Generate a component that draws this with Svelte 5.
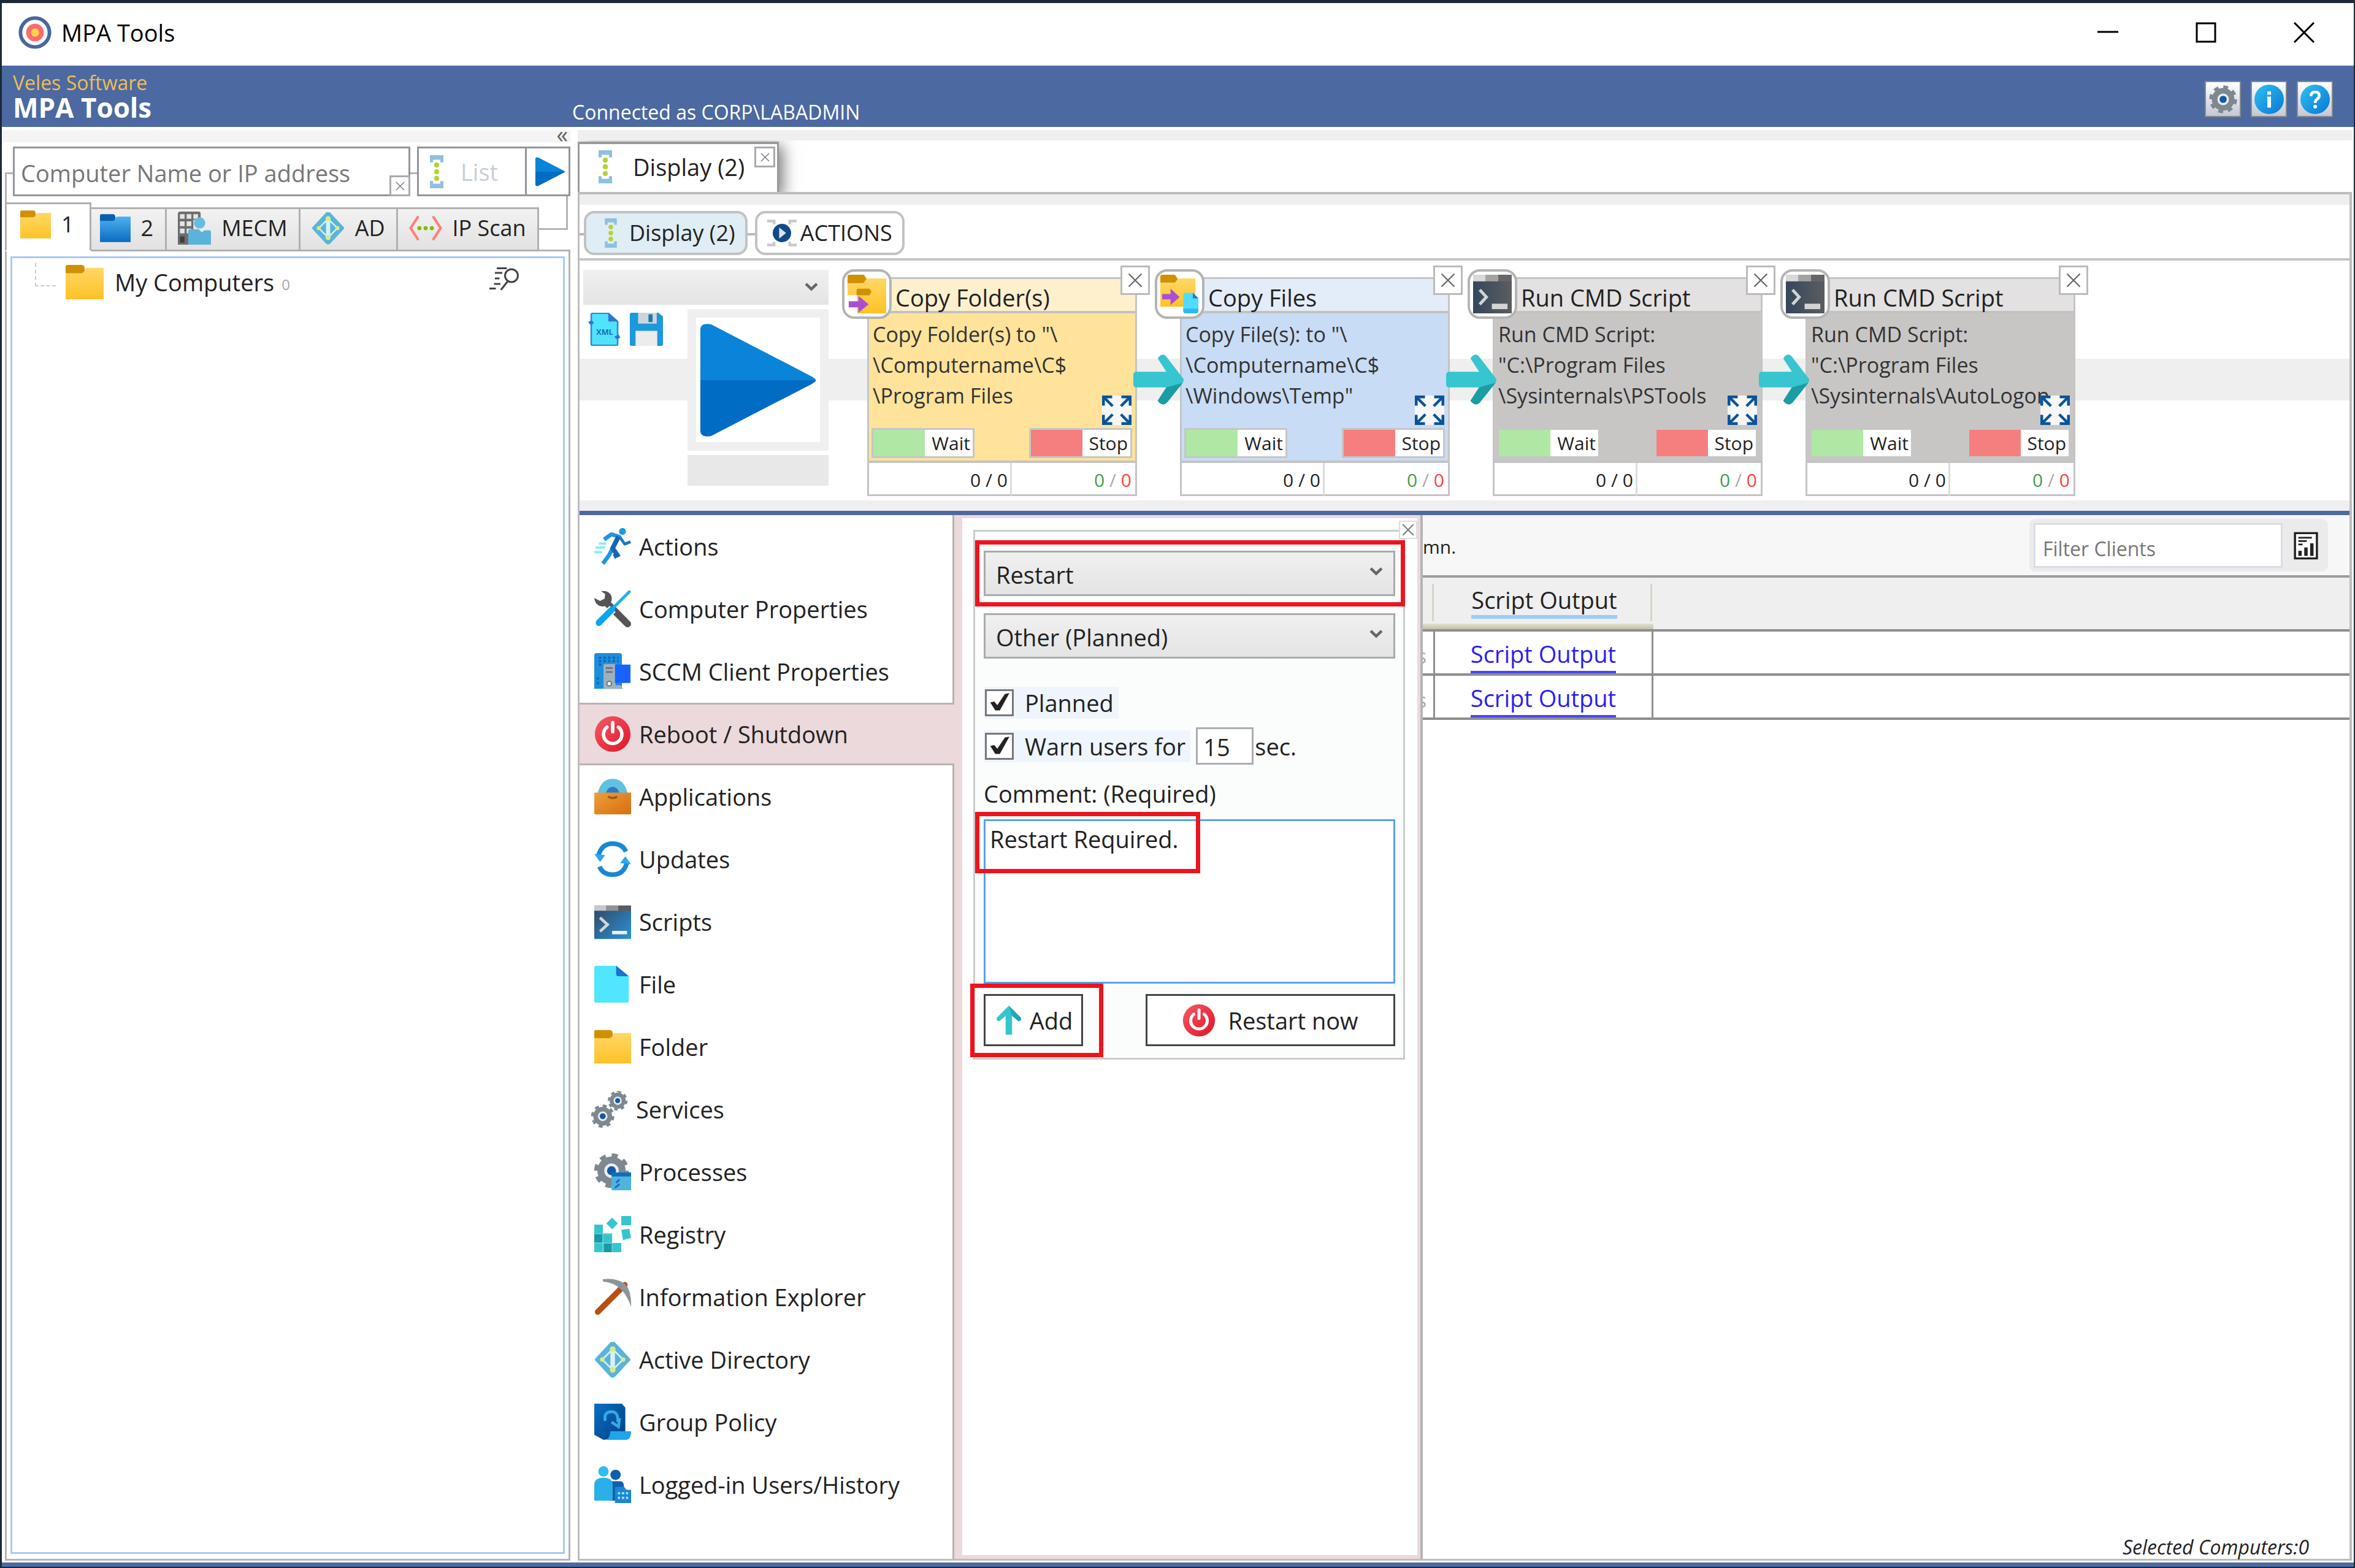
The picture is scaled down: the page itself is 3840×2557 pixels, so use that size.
<script lang="ts">
    type Step = {
        title: string;
        text: string;
        icon: string;
        tone: string;
    };

    const treeTabs = [
        { label: "1", icon: "folder" },
        { label: "2", icon: "folder-blue" },
        { label: "MECM", icon: "mecm" },
        { label: "AD", icon: "directory" },
        { label: "IP Scan", icon: "ipscan" },
    ];

    const steps: Step[] = [
        {
            title: "Copy Folder(s)",
            text: 'Copy Folder(s) to "\\\n\\Computername\\C$\n\\Program Files',
            icon: "copy-folder",
            tone: "yellow",
        },
        {
            title: "Copy Files",
            text: 'Copy File(s): to "\\\n\\Computername\\C$\n\\Windows\\Temp"',
            icon: "copy-file",
            tone: "blue",
        },
        {
            title: "Run CMD Script",
            text: 'Run CMD Script:\n"C:\\Program Files\n\\Sysinternals\\PSTools',
            icon: "cmd",
            tone: "gray",
        },
        {
            title: "Run CMD Script",
            text: 'Run CMD Script:\n"C:\\Program Files\n\\Sysinternals\\AutoLogon',
            icon: "cmd",
            tone: "gray",
        },
    ];

    const menu = [
        { label: "Actions", icon: "run" },
        { label: "Computer Properties", icon: "tools" },
        { label: "SCCM Client Properties", icon: "sccm" },
        { label: "Reboot / Shutdown", icon: "power" },
        { label: "Applications", icon: "apps" },
        { label: "Updates", icon: "updates" },
        { label: "Scripts", icon: "scripts" },
        { label: "File", icon: "file" },
        { label: "Folder", icon: "folder" },
        { label: "Services", icon: "services" },
        { label: "Processes", icon: "processes" },
        { label: "Registry", icon: "registry" },
        { label: "Information Explorer", icon: "pickaxe" },
        { label: "Active Directory", icon: "directory" },
        { label: "Group Policy", icon: "policy" },
        { label: "Logged-in Users/History", icon: "users" },
    ];

    let activeTab = $state("1");
    let selected = $state("Reboot / Shutdown");
    let action = $state("Restart");
    let reason = $state("Other (Planned)");
    let planned = $state(true);
    let warn = $state(true);
    let seconds = $state("15");
    let comment = $state("Restart Required.");
</script>

{#snippet gear(cx: number, cy: number, r: number)}
    <circle {cx} {cy} r={r * 0.9} fill="none" stroke="#7d8890" stroke-width={r * 0.22} pathLength="16" stroke-dasharray="1 1" />
    <circle {cx} {cy} r={r * 0.62} fill="#e8edf1" stroke="#7d8890" stroke-width={r * 0.4} />
    <circle {cx} {cy} r={r * 0.26} fill="#0f5aa8" />
{/snippet}

{#snippet icon(name: string)}
    <svg class="icon" viewBox="0 0 64 64" aria-hidden="true">
        {#if name === "folder"}
            <path d="M0 6q0-3 3-3h24q4 0 5 5v10H0z" fill="#d19000" />
            <path d="M0 17h26q4 0 6-5 1-4 5-4h27v53H0z" fill="url(#g-folder)" />
        {:else if name === "folder-blue"}
            <path d="M0 6q0-3 3-3h24q4 0 5 5v10H0z" fill="#0a5fae" />
            <path d="M0 17h26q4 0 6-5 1-4 5-4h27v53H0z" fill="url(#g-blue)" />
        {:else if name === "mecm"}
            <path d="M6 0h34q4 0 4 4v12H30v48H0V4q0-4 6-4z" fill="#6e6e6e" />
            <path d="M4 5h9v9H4zM17 5h9v9h-9zM30 5h9v9h-9zM4 19h9v9H4zM17 19h9v9h-9zM4 33h9v9H4zM17 33h9v9h-9z" fill="#e4e4e4" />
            <path d="M4 48h9v12H4z" fill="#3f3f3f" />
            <circle cx="42" cy="22" r="11" fill="#68bce0" />
            <path d="M20 38q0-4 4-4h16l6 6 6-4h8q4 0 4 4v24H20z" fill="#5cb3da" />
        {:else if name === "directory"}
            <path d="M32 2q2-2 4 0l26 28q2 2 0 4L36 62q-4 3-8 0L2 34q-2-2 0-4L28 2q2-2 4 0z" fill="#59b4d9" />
            <path d="M32 12 52 32 32 52 12 32z" fill="#d9f0fa" />
            <path d="M28 20v24L16 32zM36 20v24l12-12z" fill="#59b4d9" />
            <circle cx="32" cy="14" r="5" fill="#dcea86" />
            <circle cx="32" cy="50" r="5" fill="#dcea86" />
            <circle cx="14" cy="32" r="4" fill="#dcea86" />
            <circle cx="50" cy="32" r="4" fill="#dcea86" />
        {:else if name === "ipscan"}
            <path d="M18 9 3 32l15 23M46 9l15 23-15 23" fill="none" stroke="#ff8177" stroke-width="5" />
            <circle cx="20" cy="32" r="4" fill="#7fba00" />
            <circle cx="32" cy="32" r="4" fill="#7fba00" />
            <circle cx="44" cy="32" r="4" fill="#7fba00" />
        {:else if name === "list"}
            <path d="M19 0h26v14h-6V9H25v5h-6zM19 64h26V50h-6v5H25v-5h-6z" fill="#8fc0df" />
            <g fill="#b4d334">
                <circle cx="32" cy="19" r="5" />
                <circle cx="32" cy="32" r="5" />
                <circle cx="32" cy="45" r="5" />
            </g>
        {:else if name === "play"}
            <path d="M0 4q0-4 6-3l56 29q3 2 2 2H0z" fill="#0a84d8" />
            <path d="M0 60q0 4 6 3l56-29q3-2 2-2H0z" fill="#006cc4" />
        {:else if name === "actions"}
            <path d="M0 3h18v10h-6V9H0zM64 3H46v10h6V9h12zM0 61h18V51h-6v4H0zM64 61H46V51h6v4h12z" fill="#c9c9c9" />
            <circle cx="32" cy="32" r="20" fill="#124a85" />
            <path d="M26 20v24l15-12z" fill="#dbe5ee" />
        {:else if name === "gear"}
            {@render gear(32, 32, 30)}
        {:else if name === "info"}
            <circle cx="32" cy="32" r="32" fill="url(#g-badge)" />
            <path d="M28 15h8v7h-8zM28 26h8v24h-8z" fill="#fff" />
        {:else if name === "help"}
            <circle cx="32" cy="32" r="32" fill="url(#g-badge)" />
            <path d="M23 25q0-9 9-9t9 8q0 5-5 8-4 3-4 8" fill="none" stroke="#fff" stroke-width="6" />
            <circle cx="32" cy="48" r="4" fill="#fff" />
        {:else if name === "copy-folder"}
            <path d="M0 3q0-3 3-3h24l5 7-4 8H0z" fill="#d19000" />
            <path d="M0 14h26l6-8h32v58H16V34H0z" fill="url(#g-folder)" />
            <path d="M15 26q0-3 3-3h18l4 5-4 6H15z" fill="#d19000" />
            <path d="M2 44h16v-9l17 14-17 14v-9H2z" fill="#a84fd6" />
        {:else if name === "copy-file"}
            <path d="M0 3q0-3 3-3h21l5 7-4 8H0z" fill="#d19000" />
            <path d="M0 13h24l6-7h28v47H0z" fill="url(#g-folder)" />
            <path d="M3 32h14v-9l15 14-15 13v-9H3z" fill="#a84fd6" />
            <path d="M38 34q0-4 4-4h12l9 9v21q0 4-4 4H42q-4 0-4-4z" fill="#4fdcff" />
            <path d="M54 30v9h9z" fill="#1976d2" />
            <path d="M38 56h25v4q0 4-4 4H42q-4 0-4-4z" fill="#2fb8ee" />
        {:else if name === "cmd"}
            <path d="M0 0h64v64H0z" fill="url(#g-dark)" />
            <path d="M0 0h21v11H0z" fill="#d8d8d8" />
            <path d="M21 0h21v11H21z" fill="#a3a3a3" />
            <path d="M42 0h22v11H42z" fill="#666" />
            <path d="m11 25 11 12-11 12" fill="none" stroke="#d4d4d4" stroke-width="5" />
            <path d="M31 48h26v9H31z" fill="#d4d4d4" />
        {:else if name === "xml"}
            <path d="M6 4q0-3 3-3h30l18 16v43q0 3-3 3H9q-3 0-3-3z" fill="#4fe3ff" stroke="#2a86d8" stroke-width="3" />
            <path d="M39 1v16h18z" fill="#2f74cf" />
            <path d="M0 18q8-6 11 2l-6 4zM62 48q-8 6-11-2l8-4z" fill="#2f74cf" />
            <text x="32" y="43" text-anchor="middle" font-size="15" font-weight="700" fill="#156fb5">XML</text>
        {:else if name === "save"}
            <path d="M0 3q0-3 3-3h52l9 7v54q0 3-3 3H3q-3 0-3-3z" fill="#1c98dd" />
            <path d="M16 0h36v21H16z" fill="#cfd4d8" />
            <path d="M36 3h8v15h-8z" fill="#167cad" />
            <path d="M11 35h42v29H11z" fill="#ececec" />
        {:else if name === "arrow"}
            <path d="M0 26q0-4 4-4h38L31 5q6-9 12-1l20 26q2 2 0 5H0z" fill="#37c5d0" />
            <path d="M0 32h64q0 3-2 5L43 61q-6 6-12-2l11-17H4q-4 0-4-4z" fill="#37c5d0" />
            <path d="m42 42 21-6-20 25q-6 6-12-2z" fill="#1c9ca3" />
        {:else if name === "expand"}
            <path d="M0 0h64v64H0z" fill="#f7f7f7" />
            <path d="M3 22V3h19M42 3h19v19M61 42v19H42M22 61H3V42M4 4l19 19M60 4 41 23M60 60 41 41M4 60l19-19" fill="none" stroke="#0a5399" stroke-width="6" />
        {:else if name === "run"}
            <circle cx="49" cy="6" r="6" fill="#1c98e0" />
            <path d="m17 20 13-9 13 4-10 18-7 14-11 15" fill="none" stroke="#2196e0" stroke-width="7" stroke-linejoin="round" />
            <path d="m42 15-10 20 8 12-6 3" fill="none" stroke="#1565b5" stroke-width="8" />
            <path d="m44 15 9 13 10-4" fill="none" stroke="#1d76c4" stroke-width="5" stroke-linejoin="round" />
            <path d="M8 27h13M2 34h17M0 42h14" stroke="#8be9fb" stroke-width="4" />
        {:else if name === "tools"}
            <path d="m24 24 34 34" stroke="#555" stroke-width="12" stroke-linecap="round" />
            <path d="M12 1q14-2 18 9 2 9-4 14-8 6-18 2-7-4-8-13l10 5 8-4 1-8z" fill="#555" />
            <path d="M61 2 32 31" stroke="#18b0f4" stroke-width="5" stroke-linecap="round" />
            <path d="M32 32 7 56" stroke="#fff" stroke-width="15" />
            <path d="M31 33 8 56" stroke="#06a7f0" stroke-width="11" stroke-linecap="round" />
        {:else if name === "sccm"}
            <path d="M0 4q0-4 4-4h40q4 0 4 4v58H0z" fill="#1c8edb" />
            <path d="M8 8h34M8 14h34M8 20h8M4 44h8M4 52h8" stroke="#1565b5" stroke-width="4" stroke-dasharray="4 4" />
            <path d="M16 22q0-3 3-3h18v37h9l4 6H16z" fill="#9fb0bd" />
            <path d="M20 26h12M20 33h12" stroke="#65737e" stroke-width="3" />
            <circle cx="26" cy="53" r="4" fill="#fff" stroke="#65737e" stroke-width="2" />
            <path d="M36 20h27v32H36z" fill="#1a62ff" />
        {:else if name === "power"}
            <circle cx="32" cy="32" r="31" fill="url(#g-red)" />
            <path d="M22 20a16 16 0 1 0 20 0" fill="none" stroke="#fff" stroke-width="6" stroke-linecap="round" />
            <path d="M32 12v16" stroke="#fff" stroke-width="6" stroke-linecap="round" />
        {:else if name === "apps"}
            <path d="M6 26Q12 1 32 1t26 25z" fill="#5fc3df" />
            <path d="M20 26q4-11 12-11t12 11z" fill="#2b79c9" />
            <path d="M0 25h64v36q0 2-2 2H2q-2 0-2-2z" fill="url(#g-orange)" />
            <path d="M24 32q8 5 16 0" fill="none" stroke="#9c5a14" stroke-width="4" />
        {:else if name === "updates"}
            <path d="M7 27Q12 5 32 5q17 0 23 14" fill="none" stroke="#1a87d4" stroke-width="8" />
            <path d="M57 37Q52 59 32 59 15 59 9 45" fill="none" stroke="#1a87d4" stroke-width="8" />
            <path d="m0 23 19 2-9 12zM64 41l-19-2 9-12z" fill="#2ba8ea" />
        {:else if name === "scripts"}
            <path d="M0 4h64v58H0z" fill="url(#g-script)" />
            <path d="M0 4h21v9H0z" fill="#c9c9c9" />
            <path d="M21 4h21v9H21z" fill="#929292" />
            <path d="M42 4h22v9H42z" fill="#5b5b5b" />
            <path d="m10 25 13 12-13 12" fill="none" stroke="#d4d4d4" stroke-width="5" />
            <path d="M31 48h26v6H31z" fill="#eee" />
        {:else if name === "file"}
            <path d="M0 3q0-3 3-3h36l21 18v43q0 3-3 3H3q-3 0-3-3z" fill="#50e6ff" />
            <path d="M38 0v14q0 4 4 4h18z" fill="#1f6fcf" />
        {:else if name === "services"}
            {@render gear(46, 17, 17)}
            {@render gear(20, 44, 20)}
        {:else if name === "processes"}
            {@render gear(30, 30, 30)}
            <path d="M30 33h34v31H30z" fill="#4fb4dc" />
            <path d="M30 33h34v7H30z" fill="#0f6cbd" />
            <path d="m44 45-6 6M44 53l-8 7" stroke="#1565c0" stroke-width="3" />
        {:else if name === "registry"}
            <path d="M0 15h15v15h16v17h16v16H0z" fill="#36c5cf" />
            <path d="M0 31h14v15H0zM17 48h14v15H17z" fill="#179aa3" />
            <path d="M0 31h31M0 47h31M15 31v32M31 47v16" stroke="#86e3e8" />
            <path d="m31 3 10 10-10 10L21 13zM47 0h17v16H47zM47 24l14-2 3 16-14 4z" fill="#36c5cf" />
        {:else if name === "pickaxe"}
            <path d="M53 11 6 58" stroke="#b84e14" stroke-width="10" stroke-linecap="round" />
            <path d="M15 1q26-3 40 10 10 12 9 38Q57 29 46 18 34 7 15 5z" fill="#8b959c" />
        {:else if name === "policy"}
            <path d="M0 0h48l6 7v44H28q0 12-12 12L0 54z" fill="url(#g-policy)" />
            <path d="M28 48h36q0 15-9 15H20q8-3 8-15z" fill="#1ea6ec" />
            <path d="M19 30q-3-16 11-16 12 0 11 18M30 32l12 8 2-15" fill="none" stroke="#35a9e8" stroke-width="5" />
        {:else if name === "users"}
            <circle cx="37" cy="15" r="9" fill="#0f5fae" />
            <path d="M28 60V30q0-4 4-4h13q5 0 6 5l4 29z" fill="#0f5fae" />
            <circle cx="16" cy="9" r="9" fill="#30bdf2" />
            <path d="M0 33q0-13 16-13t16 13v25q0 2-2 2H2q-2 0-2-2z" fill="#2aafe9" />
            <path d="M36 36h16l4 5h8v23H36z" fill="#1587d6" />
            <path d="M41 47h18M41 55h18" stroke="#a9dcf8" stroke-width="4" stroke-dasharray="4 3" />
        {:else if name === "search"}
            <circle cx="48" cy="26" r="14" fill="none" stroke="#444" stroke-width="4" />
            <path d="M40 38 25 57M16 10h22M12 20h16M12 32h10M10 44h14M0 54h14" stroke="#444" stroke-width="4" />
        {:else if name === "report"}
            <path d="M6 2h52v60H6z" fill="#fff" stroke="#222" stroke-width="5" />
            <path d="M14 13h32M14 21h20M14 29h10" stroke="#222" stroke-width="4" />
            <path d="M18 44v12M32 36v20M46 26v30" stroke="#222" stroke-width="8" />
        {:else if name === "up"}
            <path d="M25 63V22L11 34q-8-2-5-8L32 0l26 26q3 6-5 8L39 22v41z" fill="#36c5cf" />
            <path d="M39 22 32 0l26 26q3 6-5 8z" fill="#1fa9b2" />
        {:else if name === "close"}
            <path d="m4 4 56 56M60 4 4 60" stroke="currentColor" stroke-width="6" />
        {:else if name === "chevron"}
            <path d="m6 20 26 25 26-25" fill="none" stroke="currentColor" stroke-width="13" />
        {:else if name === "target"}
            <circle cx="32" cy="32" r="28" fill="#fff" stroke="#4a66a0" stroke-width="7" />
            <circle cx="32" cy="32" r="17" fill="#ff6a6a" />
            <circle cx="32" cy="32" r="8" fill="#ffd34d" />
        {/if}
    </svg>
{/snippet}

<svg class="defs" width="0" height="0" aria-hidden="true">
    <defs>
        <linearGradient id="g-folder" x2="0" y2="1"><stop stop-color="#ffd766" /><stop offset="1" stop-color="#ffc225" /></linearGradient>
        <linearGradient id="g-blue" x2="0" y2="1"><stop stop-color="#4db1f0" /><stop offset="1" stop-color="#0b6cc0" /></linearGradient>
        <linearGradient id="g-badge" x2="1" y2="1"><stop stop-color="#2fc0f2" /><stop offset="1" stop-color="#0878d4" /></linearGradient>
        <linearGradient id="g-dark" x2="1" y2="0"><stop stop-color="#34475c" /><stop offset="1" stop-color="#5b5d60" /></linearGradient>
        <linearGradient id="g-red" x2="1" y2="1"><stop stop-color="#f85a64" /><stop offset="1" stop-color="#dd1428" /></linearGradient>
        <linearGradient id="g-orange" x2="1" y2="1"><stop stop-color="#ee9d3c" /><stop offset="1" stop-color="#d6700f" /></linearGradient>
        <linearGradient id="g-script" x2="1" y2="1"><stop stop-color="#33475d" /><stop offset="1" stop-color="#2892dc" /></linearGradient>
        <linearGradient id="g-policy" x2="1" y2="1"><stop stop-color="#0a6fc2" /><stop offset="1" stop-color="#003f87" /></linearGradient>
    </defs>
</svg>

<div class="window">
    <div class="titlebar">
        <span class="app-icon">{@render icon("target")}</span>
        <span class="app-title">MPA Tools</span>
        <div class="window-buttons">
            <button aria-label="Minimize">
                <svg viewBox="0 0 34 34"><path d="M0 16h34" /></svg>
            </button>
            <button aria-label="Maximize">
                <svg viewBox="0 0 34 34"><path d="M2 2h30v30H2z" /></svg>
            </button>
            <button aria-label="Close">
                <svg viewBox="0 0 34 34"><path d="m1 1 32 32M33 1 1 33" /></svg>
            </button>
        </div>
    </div>

    <header class="banner">
        <div class="brand">
            <span class="vendor">Veles Software</span>
            <h1>MPA Tools</h1>
        </div>
        <span class="connected">Connected as CORP\LABADMIN</span>
        <div class="banner-buttons">
            <button aria-label="Settings">{@render icon("gear")}</button>
            <button aria-label="About">{@render icon("info")}</button>
            <button aria-label="Help">{@render icon("help")}</button>
        </div>
    </header>

    <main>
        <aside class="computers">
            <div class="strip collapse"><button aria-label="Collapse">«</button></div>
            <div class="lookup">
                <div class="search-row">
                    <div class="search-box">
                        <input aria-label="Computer name" placeholder="Computer Name or IP address" />
                        <button class="mini-close" aria-label="Clear">{@render icon("close")}</button>
                    </div>
                    <div class="list-box">
                        <button class="list">{@render icon("list")}<span>List</span></button>
                        <button class="go" aria-label="Go">{@render icon("play")}</button>
                    </div>
                </div>
                <div class="tree-tabs">
                    {#each treeTabs as tab}
                        <button
                            class:active={activeTab === tab.label}
                            class:folder={tab.icon.startsWith("folder")}
                            onclick={() => (activeTab = tab.label)}
                        >
                            {@render icon(tab.icon)}
                            <span>{tab.label}</span>
                        </button>
                    {/each}
                </div>
            </div>
            <div class="tree-pane">
                <div class="tree">
                    <div class="tree-node">
                        <span class="branch"></span>
                        <span class="node-icon">{@render icon("folder")}</span>
                        <span>My Computers</span>
                        <small>0</small>
                        <button class="find" aria-label="Find">{@render icon("search")}</button>
                    </div>
                </div>
            </div>
        </aside>

        <section class="workspace">
            <div class="strip"></div>
            <div class="doc-tabs">
                <div class="doc-tab">
                    {@render icon("list")}
                    <span>Display (2)</span>
                    <button class="mini-close" aria-label="Close tab">{@render icon("close")}</button>
                </div>
            </div>

            <div class="frame">
                <div class="strip"></div>
                <div class="view-tabs">
                    <button class="view on">{@render icon("list")}<span>Display (2)</span></button>
                    <button class="view">{@render icon("actions")}<span>ACTIONS</span></button>
                </div>

                <div class="flow">
                    <div class="flow-controls">
                        <div class="select preset">
                            <select aria-label="Saved sequence"><option></option></select>
                            {@render icon("chevron")}
                        </div>
                        <div class="files">
                            <button aria-label="Load XML">{@render icon("xml")}</button>
                            <button aria-label="Save">{@render icon("save")}</button>
                        </div>
                        <button class="run" aria-label="Run">{@render icon("play")}</button>
                        <div class="run-state"></div>
                    </div>

                    <div class="steps">
                        {#each steps as step, i}
                            {#if i > 0}
                                <span class="arrow">{@render icon("arrow")}</span>
                            {/if}
                            <article class="step {step.tone}">
                                <span class="badge">{@render icon(step.icon)}</span>
                                <button class="remove" aria-label="Remove step">{@render icon("close")}</button>
                                <h2>{step.title}</h2>
                                <div class="step-body">
                                    <p>{step.text}</p>
                                    <button class="expand" aria-label="Expand">{@render icon("expand")}</button>
                                    <div class="toggles">
                                        <button class="toggle wait">Wait</button>
                                        <button class="toggle stop">Stop</button>
                                    </div>
                                </div>
                                <div class="counts">
                                    <span>0 / 0</span>
                                    <span><b class="ok">0</b> <i>/</i> <b class="bad">0</b></span>
                                </div>
                            </article>
                        {/each}
                    </div>
                </div>
                <div class="strip"></div>

                <div class="lower">
                    <nav>
                        {#each menu as item}
                            <button
                                class:selected={selected === item.label}
                                class:outdent={item.icon === "services"}
                                onclick={() => (selected = item.label)}
                            >
                                {@render icon(item.icon)}
                                <span>{item.label}</span>
                            </button>
                        {/each}
                        <div class="nav-rest"></div>
                    </nav>

                    <div class="detail">
                        <div class="detail-body">
                            <button class="panel-close" aria-label="Close panel">{@render icon("close")}</button>
                            <form onsubmit={(e) => e.preventDefault()}>
                                <div class="select marked">
                                    <select aria-label="Action" bind:value={action}>
                                        <option>Restart</option>
                                        <option>Shutdown</option>
                                    </select>
                                    {@render icon("chevron")}
                                </div>
                                <div class="select">
                                    <select aria-label="Reason" bind:value={reason}>
                                        <option>Other (Planned)</option>
                                    </select>
                                    {@render icon("chevron")}
                                </div>
                                <div class="check-row first">
                                    <label><input type="checkbox" bind:checked={planned} />Planned</label>
                                </div>
                                <div class="check-row">
                                    <label><input type="checkbox" bind:checked={warn} />Warn users for</label>
                                    <input class="seconds" id="seconds" bind:value={seconds} />
                                    <label class="unit" for="seconds">sec.</label>
                                </div>
                                <label class="caption" for="comment">Comment: (Required)</label>
                                <div class="comment">
                                    <textarea id="comment" bind:value={comment}></textarea>
                                </div>
                                <div class="buttons">
                                    <div class="add">
                                        <button>{@render icon("up")}Add</button>
                                    </div>
                                    <button class="now">{@render icon("power")}Restart now</button>
                                </div>
                            </form>
                        </div>
                    </div>

                    <div class="clients">
                        <div class="clients-bar">
                            <span class="hint">mn.</span>
                            <div class="filter">
                                <input aria-label="Filter clients" placeholder="Filter Clients" />
                                <button aria-label="Report">{@render icon("report")}</button>
                            </div>
                        </div>
                        <table>
                            <thead>
                                <tr>
                                    <th class="cut"></th>
                                    <th class="output"><span>Script Output</span></th>
                                    <th></th>
                                </tr>
                            </thead>
                            <tbody>
                                {#each [1, 2] as row (row)}
                                    <tr>
                                        <td class="cut"><span>s</span></td>
                                        <td class="output"><a href="#output-{row}">Script Output</a></td>
                                        <td></td>
                                    </tr>
                                {/each}
                            </tbody>
                        </table>
                        <p class="status">Selected Computers:0</p>
                    </div>
                </div>
            </div>
        </section>
    </main>
</div>

<style>
    :global(body) {
        margin: 0;
        background: #fff;
    }

    .window,
    .window *,
    .window *::before,
    .window *::after {
        box-sizing: border-box;
    }

    .window {
        display: flex;
        flex-direction: column;
        min-height: 100vh;
        border: solid #1b2a38;
        border-width: 5px 2px 2px 3px;
        background: #fff;
        color: #222;
        font: 38px/52px "Open Sans", "Noto Sans", sans-serif;
    }

    .defs {
        position: absolute;
    }

    .icon {
        display: block;
        flex: none;
        width: 54px;
        height: 54px;
    }

    button,
    input,
    select,
    textarea {
        font: inherit;
        color: inherit;
        margin: 0;
        padding: 0;
        border: 0;
        border-radius: 0;
        background: none;
    }

    h1,
    h2,
    p {
        margin: 0;
    }

    /* title bar */
    .titlebar {
        display: flex;
        align-items: center;
        height: 102px;
        padding: 0 10px 6px 27px;
        color: #000;
    }

    .app-title {
        margin-left: 16px;
    }

    .window-buttons {
        display: flex;
        gap: 18px;
        margin-left: auto;
    }

    .window-buttons button {
        display: grid;
        place-items: center;
        width: 142px;
        height: 92px;
    }

    .window-buttons svg {
        width: 34px;
        height: 34px;
        fill: none;
        stroke: #000;
        stroke-width: 3px;
    }

    /* banner */
    .banner {
        display: flex;
        height: 100px;
        padding-left: 18px;
        padding-right: 34px;
        background: #4c69a1;
        color: #fff;
    }

    .brand {
        display: flex;
        flex-direction: column;
        width: 912px;
        padding-top: 9px;
    }

    .vendor {
        font-size: 32px;
        line-height: 38px;
        color: #f0bd55;
    }

    h1 {
        font-size: 44px;
        font-weight: 700;
        line-height: 42px;
    }

    .connected {
        align-self: flex-end;
        font-size: 32px;
        line-height: 48px;
    }

    .banner-buttons {
        display: flex;
        gap: 16px;
        margin: 25px 0 0 auto;
    }

    .banner-buttons button {
        display: grid;
        place-items: center;
        width: 59px;
        height: 59px;
        border: 2px solid #858a90;
        background: linear-gradient(#fff, #c3c8d2);
    }

    .banner-buttons .icon {
        width: 48px;
        height: 48px;
    }

    main {
        display: flex;
        flex: 1;
        padding: 5px 3px 3px 2px;
        border-bottom: 7px solid #4c69a1;
    }

    .strip {
        height: 17px;
        background: #efefef;
    }

    /* computers column */
    .computers {
        display: flex;
        flex: 0 0 925px;
        flex-direction: column;
        margin-right: 12px;
    }

    .collapse {
        height: 20px;
        background: #f4f4f4;
    }

    .collapse button {
        display: block;
        margin: 0 4px 0 auto;
        line-height: 12px;
        color: #666;
    }

    .lookup {
        position: relative;
        padding: 7px 0 0 3px;
    }

    /* group outline running behind the boxes and tabs */
    .lookup::before {
        content: "";
        position: absolute;
        inset: 49px 4px 32px 3px;
        border: 3px solid #b4b4b8;
    }

    .search-row {
        position: relative;
        display: flex;
        gap: 11px;
        height: 81px;
        padding-left: 13px;
    }

    .search-box,
    .list-box {
        position: relative;
        display: flex;
        border: 3px solid #93959d;
        background: #fff;
    }

    .search-box {
        flex: 1;
    }

    .search-box input {
        width: 100%;
        padding: 4px 10px 0;
    }

    input::placeholder {
        color: #777;
        opacity: 1;
    }

    .mini-close {
        position: absolute;
        display: grid;
        place-items: center;
        width: 34px;
        height: 34px;
        border: 3px solid #a9a9b1;
        background: #fff;
        color: #777;
    }

    .mini-close .icon {
        width: 15px;
        height: 15px;
    }

    .search-box .mini-close {
        right: -3px;
        bottom: -3px;
    }

    .list-box {
        width: 250px;
    }

    .list {
        display: flex;
        flex: 1;
        align-items: center;
        gap: 12px;
        padding-left: 2px;
        border-right: 3px solid #93959d;
        color: #c9ced6;
    }

    .go {
        padding: 0 6px 0 14px;
    }

    .go .icon {
        width: 48px;
        height: 48px;
    }

    .tree-tabs {
        position: relative;
        z-index: 1;
        display: flex;
        align-items: flex-end;
        margin: 10px 0 -3px;
        font-size: 36px;
    }

    .tree-tabs button {
        display: flex;
        align-items: center;
        gap: 17px;
        height: 72px;
        padding: 0 18px 4px;
        border: 3px solid #b0b0b0;
        border-left-width: 0;
        background: linear-gradient(#f2f2f2, #e2e2e2);
    }

    .tree-tabs button.folder {
        padding: 0 19px 4px 14px;
    }

    .tree-tabs button.active {
        height: 80px;
        padding: 0 25px 8px 22px;
        border-left-width: 3px;
        border-bottom-color: #fff;
        background: #fff;
    }

    .tree-tabs .folder .icon {
        width: 50px;
        height: 50px;
    }

    .tree-pane {
        display: flex;
        flex: 1;
        margin-left: 3px;
        padding: 8px 6px;
        border: 3px solid #b4b4b4;
    }

    .tree {
        flex: 1;
        border: 3px solid #a6cbf2;
    }

    .tree-node {
        display: flex;
        align-items: center;
        height: 78px;
        padding: 0 72px 0 35px;
    }

    .branch {
        width: 34px;
        height: 38px;
        margin: 0 16px 24px 2px;
        border: dashed #c5cbd8;
        border-width: 0 0 2px 2px;
    }

    .node-icon .icon {
        width: 62px;
        height: 66px;
    }

    .node-icon {
        margin-right: 18px;
    }

    .tree-node small {
        margin: 8px 0 0 12px;
        font-size: 24px;
        color: #aaa;
    }

    .find {
        margin: 0 0 12px auto;
    }

    .find .icon {
        width: 48px;
        height: 48px;
    }

    /* workspace */
    .workspace {
        display: flex;
        flex: 1;
        flex-direction: column;
        min-width: 0;
    }

    .doc-tabs {
        height: 84px;
        padding-top: 2px;
        overflow: hidden;
    }

    .doc-tab {
        position: relative;
        display: flex;
        align-items: center;
        gap: 18px;
        width: 328px;
        height: 86px;
        padding: 0 0 6px 15px;
        border: 3px solid #9a9a9a;
        border-top-width: 4px;
        background: #fff;
        box-shadow: 6px 6px 24px rgba(0, 0, 0, 0.55);
    }

    .doc-tab .mini-close {
        top: 4px;
        right: 3px;
    }

    .frame {
        display: flex;
        flex: 1;
        flex-direction: column;
        border: 4px solid #bdbdbd;
        border-width: 4px 4px 3px 3px;
    }

    .view-tabs {
        position: relative;
        display: flex;
        gap: 12px;
        padding: 10px 0 5px 7px;
        border-bottom: 4px solid #c4c4c4;
    }

    .view-tabs::before {
        content: "";
        position: absolute;
        top: 46px;
        left: 0;
        width: 300px;
        height: 4px;
        background: #b8b8b8;
    }

    .view {
        position: relative;
        display: flex;
        align-items: center;
        gap: 6px;
        height: 72px;
        padding: 0 16px;
        border: 4px solid #c2c2c2;
        border-radius: 17px;
        background: #fff;
        font-size: 36px;
    }

    .view.on {
        background: #dfedf4;
    }

    .view .icon {
        width: 48px;
        height: 48px;
    }

    /* action sequence */
    .flow {
        display: flex;
        height: 391px;
        padding-left: 6px;
        background: linear-gradient(transparent 160px, #efefef 160px 228px, transparent 228px);
    }

    .flow-controls {
        display: grid;
        grid-template: 57px 231px 50px / 162px 230px;
        gap: 7px 8px;
        width: 400px;
        padding-top: 15px;
        align-content: start;
    }

    .select {
        position: relative;
        height: 74px;
    }

    .select select {
        appearance: none;
        width: 100%;
        height: 100%;
        padding: 3px 60px 0 17px;
        border: 3px solid #aaa;
        background: linear-gradient(#f0f0f0, #e4e4e4);
    }

    .select > .icon {
        position: absolute;
        top: 22px;
        right: 20px;
        width: 22px;
        height: 22px;
        color: #666;
        pointer-events: none;
    }

    .preset {
        grid-column: 1 / 3;
        height: 57px;
    }

    .preset select {
        border: 0;
    }

    .preset > .icon {
        top: 16px;
        right: 17px;
    }

    .files {
        display: flex;
        gap: 14px;
        padding: 6px 0 0 8px;
    }

    .files button {
        align-self: flex-start;
    }

    .run {
        padding: 6px 7px;
        border: 14px solid #efefef;
        background: #fff;
    }

    .run .icon {
        width: 188px;
        height: 190px;
    }

    .run-state {
        grid-column: 2;
        background: #e8e8e8;
    }

    .steps {
        display: flex;
        align-items: flex-start;
        padding: 27px 0 0 63px;
    }

    .arrow {
        position: relative;
        z-index: 1;
        margin: 126px -6px 0;
    }

    .arrow .icon {
        width: 82px;
        height: 82px;
    }

    .step {
        position: relative;
        width: 440px;
        border: 3px solid #c4c4c4;
        --body: #c8c6c5;
        --head: #e3e1e1;
    }

    .step.yellow {
        --body: #ffe39b;
        --head: #fff0cd;
    }

    .step.blue {
        --body: #c8dcf5;
        --head: #e3edfa;
    }

    .badge {
        position: absolute;
        top: -16px;
        left: -44px;
        z-index: 2;
        padding: 5px;
        border: 4px solid #b4b4b4;
        border-radius: 20px;
        background: #fff;
    }

    .badge .icon {
        width: 63px;
        height: 63px;
    }

    .remove {
        position: absolute;
        top: -22px;
        right: -24px;
        display: grid;
        place-items: center;
        width: 48px;
        height: 48px;
        border: 3px solid #bbb;
        background: #fff;
        color: #666;
    }

    .remove .icon {
        width: 24px;
        height: 24px;
    }

    h2 {
        height: 56px;
        padding: 4px 0 0 43px;
        border-bottom: 4px solid #c4c2bd;
        background: var(--head);
        font-size: 38px;
        font-weight: 400;
        line-height: 52px;
    }

    .step-body {
        display: flex;
        flex-direction: column;
        justify-content: space-between;
        height: 240px;
        padding: 9px 5px 4px 4px;
        background: var(--body);
    }

    .step-body p {
        padding-left: 2px;
        font-size: 34px;
        line-height: 50px;
        white-space: pre;
        color: #333;
    }

    .expand {
        position: absolute;
        top: 190px;
        right: 6px;
    }

    .expand .icon {
        width: 48px;
        height: 48px;
    }

    .toggles {
        display: flex;
        justify-content: space-between;
    }

    .toggle {
        width: 168px;
        height: 49px;
        padding-right: 4px;
        border: 3px solid #c6c6c6;
        font-size: 30px;
        line-height: 42px;
        text-align: right;
    }

    .wait {
        background: linear-gradient(90deg, #aee8a4 84px, #fff 84px);
    }

    .stop {
        background: linear-gradient(90deg, #f57f7f 84px, #fff 84px);
    }

    .counts {
        display: grid;
        grid-template-columns: 230px 1fr;
        height: 55px;
        border-top: 4px solid #c4c4c4;
        font-size: 30px;
        line-height: 51px;
        text-align: right;
    }

    .counts span {
        padding: 2px 4px 0;
    }

    .counts span + span {
        padding: 5px 6px 0;
        border-left: 3px solid #ddd;
        line-height: 46px;
    }

    .counts b,
    .counts i {
        font-weight: 400;
        font-style: normal;
        color: #aaa;
    }

    .counts .ok {
        color: #3f9f4a;
    }

    .counts .bad {
        color: #ff4040;
    }

    /* lower half */
    .lower {
        display: flex;
        flex: 1;
        border-top: 7px solid #4c69a1;
    }

    nav {
        display: flex;
        flex: 0 0 611px;
        flex-direction: column;
    }

    nav button {
        display: flex;
        align-items: center;
        gap: 12px;
        height: 102px;
        padding-left: 23px;
        border-right: 3px solid #b4b4b4;
    }

    nav button.selected {
        border: solid #b8b4b4;
        border-width: 3px 0;
        background: #ecd9db;
    }

    nav button.outdent {
        padding-left: 18px;
    }

    nav .icon {
        width: 62px;
        height: 60px;
    }

    .nav-rest {
        flex: 1;
        border-right: 3px solid #b4b4b4;
    }

    .detail {
        flex: 0 0 764px;
        display: flex;
        padding: 5px 5px 6px 13px;
        border-right: 4px solid #b4b4b4;
        background: #ecd9db;
    }

    .detail-body {
        position: relative;
        flex: 1;
        padding: 19px 20px 0 18px;
        background: #fff;
    }

    .panel-close {
        position: absolute;
        top: 4px;
        right: 0;
        display: grid;
        place-items: center;
        width: 30px;
        height: 30px;
        border: 2px solid #dcdce8;
        background: #fff;
        color: #777;
    }

    .panel-close .icon {
        width: 20px;
        height: 20px;
    }

    form {
        padding: 31px 13px 19px 14px;
        border: 3px solid #cacccc;
        background: #fbfdfd;
    }

    form .select + .select {
        margin-top: 28px;
    }

    /* red call-out frames */
    .marked::after,
    .comment::after,
    .add::after {
        content: "";
        position: absolute;
        border: 7px solid #ee131c;
        pointer-events: none;
    }

    .marked::after {
        inset: -17px -16px -17px -14px;
    }

    .check-row {
        display: flex;
        align-items: center;
        height: 61px;
        margin-top: 10px;
    }

    .check-row.first {
        margin-top: 41px;
    }

    .check-row label {
        display: flex;
        align-items: center;
        gap: 18px;
        padding: 0 8px 0 2px;
        background: #eef5fd;
    }

    .check-row label.unit {
        padding: 0 2px;
        background: none;
    }

    input[type="checkbox"] {
        appearance: none;
        width: 47px;
        height: 44px;
        border: 3px solid #777;
        background: #fff;
    }

    input[type="checkbox"]:checked::before {
        content: "";
        display: block;
        height: 100%;
        background: #222;
        clip-path: polygon(14% 50%, 30% 46%, 42% 62%, 72% 14%, 90% 10%, 52% 84%, 34% 84%);
    }

    .seconds {
        width: 94px;
        height: 61px;
        margin-left: 9px;
        padding: 2px 9px 0;
        border: 3px solid #aaadb3;
        background: #fff;
    }

    .caption {
        display: block;
        margin: 21px 0 16px;
    }

    .comment {
        position: relative;
        height: 268px;
    }

    .comment textarea {
        display: block;
        width: 100%;
        height: 100%;
        padding: 3px 7px;
        border: 3px solid #5aa1ea;
        background: #fff;
        resize: none;
    }

    .comment::after {
        top: -12px;
        left: -14px;
        width: 367px;
        height: 100px;
    }

    .buttons {
        display: flex;
        justify-content: space-between;
        margin-top: 17px;
    }

    .buttons button {
        display: flex;
        align-items: center;
        justify-content: center;
        gap: 10px;
        width: 162px;
        height: 85px;
        border: 3px solid #444;
        background: #fff;
    }

    .buttons button.now {
        gap: 20px;
        width: 407px;
    }

    .add {
        position: relative;
    }

    .add .icon {
        width: 48px;
        height: 48px;
    }

    .add::after {
        inset: -17px -33px -18px -22px;
    }

    /* clients */
    .clients {
        display: flex;
        flex: 1;
        flex-direction: column;
        min-width: 0;
    }

    .clients-bar {
        display: flex;
        align-items: center;
        justify-content: space-between;
        height: 102px;
        padding-right: 35px;
        border-bottom: 4px solid #9c9c9c;
        background: #f7f7f7;
        font-size: 32px;
    }

    .hint {
        padding-top: 6px;
        font-size: 30px;
    }

    .filter {
        display: flex;
        align-items: center;
        gap: 16px;
        padding: 7px 14px 6px 7px;
        border-radius: 10px;
        background: #ebebeb;
    }

    .filter input {
        width: 406px;
        height: 73px;
        padding: 10px 12px 0;
        border: 3px solid #dcdce8;
        background: #fff;
    }

    .filter .icon {
        width: 44px;
        height: 48px;
    }

    table {
        width: 100%;
        table-layout: fixed;
        border-spacing: 0;
    }

    th,
    td {
        padding: 0;
        border-bottom: 4px solid #8e8e8e;
        font-weight: 400;
        vertical-align: top;
        text-align: center;
    }

    th {
        height: 88px;
        background: #efefef;
    }

    th.cut,
    th.output {
        background:
            linear-gradient(#d5d5c5, #d5d5c5) right 2px top 10px / 3px 61px no-repeat,
            linear-gradient(#e2e0d0, #c3c0a8) bottom / 100% 9px no-repeat,
            #efefef;
    }

    td {
        height: 72px;
    }

    .cut {
        width: 20px;
    }

    .output {
        width: 356px;
    }

    td.cut,
    td.output {
        border-right: 3px solid #8e8e8e;
    }

    /* only the tail of this column shows beside the panel */
    td.cut span {
        display: flex;
        justify-content: flex-end;
        width: 6px;
        padding-top: 14px;
        overflow: hidden;
        font-size: 32px;
        color: #b9a3a3;
    }

    th span {
        display: inline-block;
        margin-top: 11px;
        border-bottom: 6px solid #99cbff;
        line-height: 50px;
    }

    td a {
        display: inline-block;
        padding-top: 8px;
        border-bottom: 4px solid #4646f2;
        line-height: 56px;
        color: #2a1ef5;
        text-decoration: none;
    }

    .status {
        margin: auto 66px 0 auto;
        font-size: 32px;
        font-style: italic;
        line-height: 38px;
    }
</style>
